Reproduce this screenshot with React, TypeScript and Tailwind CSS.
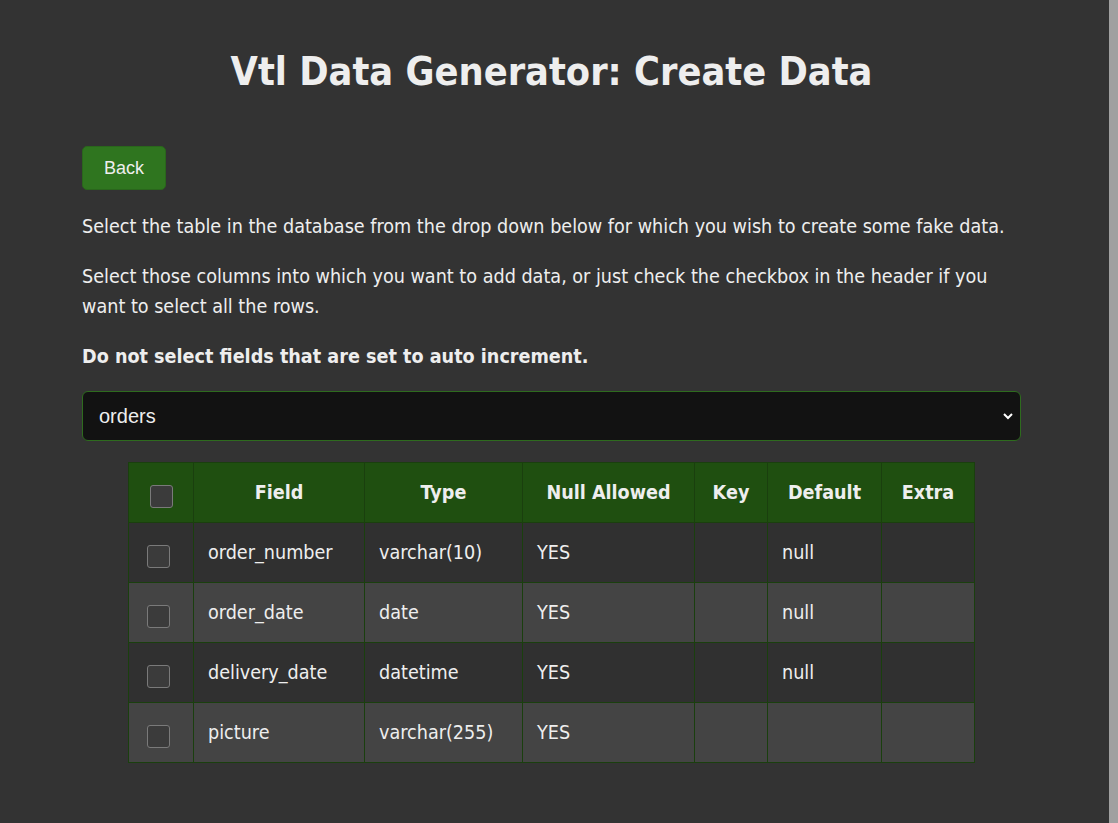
import React from "react";

const rows = [
  { f: "order_number", t: "varchar(10)", n: "YES", k: "", d: "null", e: "" },
  { f: "order_date", t: "date", n: "YES", k: "", d: "null", e: "" },
  { f: "delivery_date", t: "datetime", n: "YES", k: "", d: "null", e: "" },
  { f: "picture", t: "varchar(255)", n: "YES", k: "", d: "", e: "" },
];

export default function App() {
  return (
    <div className="flex w-[1118px] h-[823px] overflow-hidden bg-[#333333]">
      <div className="flex-1 text-[#eeeeee] pl-[82px] pr-[88px] pt-[46px]" style={{ fontFamily: '"DejaVu Sans Condensed", "DejaVu Sans", Verdana, sans-serif' }}>
        <h1 className="text-center font-bold text-[39.3px] leading-[52px]">Vtl Data Generator: Create Data</h1>
        <button
          className="mt-[48px] w-[84px] h-[44px] rounded-[5px] bg-[#2f751f] border border-[#2a661c] text-[18px] text-[#eeeeee]"
          style={{ fontFamily: '"Liberation Sans", Arial, sans-serif' }}
        >
          Back
        </button>
        <p className="mt-[22px] text-[19.6px] leading-[30px]">Select the table in the database from the drop down below for which you wish to create some fake data.</p>
        <p className="mt-[20px] text-[19.6px] leading-[30px]">Select those columns into which you want to add data, or just check the checkbox in the header if you want to select all the rows.</p>
        <p className="mt-[20px] text-[19.6px] leading-[30px] font-bold">Do not select fields that are set to auto increment.</p>
        <div
          className="mt-[19px] h-[50px] rounded-[6px] bg-[#121212] border border-[#2e6b1e] flex items-center justify-between pl-[16px] pr-[6px] text-[20px]"
          style={{ fontFamily: '"Liberation Sans", Arial, sans-serif' }}
        >
          <span>orders</span>
          <svg width="12" height="8" viewBox="0 0 12 8"><path d="M2 2 L6 6 L10 2" stroke="#fff" strokeWidth="2" fill="none" /></svg>
        </div>
        <table className="mt-[21px] mx-auto border-collapse text-[19.6px]">
          <thead>
            <tr className="bg-[#1f4f10] h-[60px] font-bold">
              <th className="w-[65px] border border-[#1a3f0e]">
                <div className="w-[23px] h-[23px] rounded-[3px] border border-[#7a7a7a] bg-[#3b3b3b] mx-auto mt-[8px]" />
              </th>
              <th className="w-[171px] border border-[#1a3f0e]">Field</th>
              <th className="w-[158px] border border-[#1a3f0e]">Type</th>
              <th className="w-[172px] border border-[#1a3f0e]">Null Allowed</th>
              <th className="w-[73px] border border-[#1a3f0e]">Key</th>
              <th className="w-[114px] border border-[#1a3f0e]">Default</th>
              <th className="w-[93px] border border-[#1a3f0e]">Extra</th>
            </tr>
          </thead>
          <tbody>
            {rows.map((r, i) => (
              <tr key={i} className={(i % 2 === 0 ? "bg-[#303030]" : "bg-[#444444]") + " h-[60px]"}>
                <td className="border border-[#1a3f0e]">
                  <div className="w-[23px] h-[23px] rounded-[3px] border border-[#7a7a7a] bg-[#3b3b3b] ml-[18px] mt-[8px]" />
                </td>
                <td className="border border-[#1a3f0e] px-[14px]">{r.f}</td>
                <td className="border border-[#1a3f0e] px-[14px]">{r.t}</td>
                <td className="border border-[#1a3f0e] px-[14px]">{r.n}</td>
                <td className="border border-[#1a3f0e] px-[14px]">{r.k}</td>
                <td className="border border-[#1a3f0e] px-[14px]">{r.d}</td>
                <td className="border border-[#1a3f0e] px-[14px]">{r.e}</td>
              </tr>
            ))}
          </tbody>
        </table>
      </div>
      <div className="w-[9px] h-full bg-[#a0a0a0]" />
    </div>
  );
}
